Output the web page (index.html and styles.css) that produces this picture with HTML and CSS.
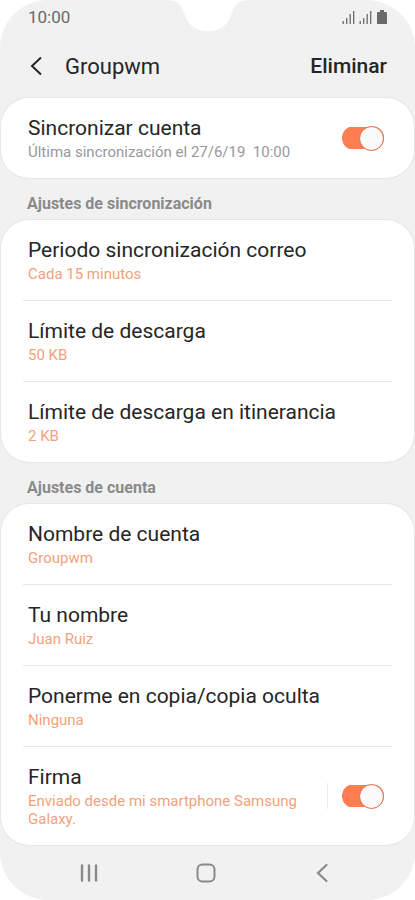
FILE: index.html
```html
<!DOCTYPE html>
<html lang="es">
<head>
    <meta charset="UTF-8">
    <meta name="viewport" content="width=device-width, initial-scale=1.0">
    <title>Groupwm</title>
    <link rel="stylesheet" href="styles.css">
</head>
<body>
    <div class="phone">
        <div class="status-bar">
            <span>10:00</span>
            <svg class="notch" width="84" height="32" viewBox="0 0 84 32">
                <path d="M0 0C12 0 15 5 18 13C22 25 29 31 42 31C55 31 62 25 66 13C69 5 72 0 84 0Z" fill="#fff"/>
            </svg>
            <svg class="status-icons" width="46" height="16" viewBox="0 0 46 16">
                <g stroke="#6a6a6a" stroke-width="1.3">
                    <path d="M1.2 15v-3M4.7 15v-6M8.2 15V5M11.7 15V2"/>
                    <path d="M18.2 15v-3M21.7 15v-6M25.2 15V5M28.7 15V2"/>
                </g>
                <path d="M35 15V4q0-1 1-1h2V1h4v2h2q1 0 1 1v11z" fill="#6a6a6a"/>
            </svg>
        </div>

        <header class="header">
            <button class="back" aria-label="Atrás">
                <svg width="12" height="20" viewBox="0 0 12 20">
                    <path d="M11 1.500L2 10l9 8.500" fill="none" stroke="#252525" stroke-width="2"/>
                </svg>
            </button>
            <h1>Groupwm</h1>
            <button class="delete">Eliminar</button>
        </header>

        <main>
            <section class="card">
                <div class="row">
                    <label class="text" for="sync">
                        <span class="title">Sincronizar cuenta</span>
                        <span class="sub grey">Última sincronización el 27/6/19 &nbsp;10:00</span>
                    </label>
                    <input class="switch" type="checkbox" id="sync" checked>
                </div>
            </section>

            <h2>Ajustes de sincronización</h2>
            <section class="card">
                <div class="row">
                    <div class="text">
                        <span class="title">Periodo sincronización correo</span>
                        <span class="sub">Cada 15 minutos</span>
                    </div>
                </div>
                <div class="row">
                    <div class="text">
                        <span class="title">Límite de descarga</span>
                        <span class="sub">50 KB</span>
                    </div>
                </div>
                <div class="row">
                    <div class="text">
                        <span class="title">Límite de descarga en itinerancia</span>
                        <span class="sub">2 KB</span>
                    </div>
                </div>
            </section>

            <h2>Ajustes de cuenta</h2>
            <section class="card">
                <div class="row">
                    <div class="text">
                        <span class="title">Nombre de cuenta</span>
                        <span class="sub">Groupwm</span>
                    </div>
                </div>
                <div class="row">
                    <div class="text">
                        <span class="title">Tu nombre</span>
                        <span class="sub">Juan Ruiz</span>
                    </div>
                </div>
                <div class="row">
                    <div class="text">
                        <span class="title">Ponerme en copia/copia oculta</span>
                        <span class="sub">Ninguna</span>
                    </div>
                </div>
                <div class="row">
                    <label class="text" for="signature">
                        <span class="title">Firma</span>
                        <span class="sub">Enviado desde mi smartphone Samsung Galaxy.</span>
                    </label>
                    <span class="separator"></span>
                    <input class="switch" type="checkbox" id="signature" checked>
                </div>
            </section>
        </main>

        <nav class="nav-bar">
            <button aria-label="Recientes">
                <svg width="20" height="20" viewBox="0 0 20 20">
                    <path d="M3 2.500v15M10 2.500v15M17 2.500v15" stroke="#8a8a8a" stroke-width="2.400" stroke-linecap="round"/>
                </svg>
            </button>
            <button aria-label="Inicio">
                <svg width="20" height="20" viewBox="0 0 20 20">
                    <rect x="1.500" y="1.500" width="17" height="17" rx="5" fill="none" stroke="#8a8a8a" stroke-width="2"/>
                </svg>
            </button>
            <button aria-label="Volver">
                <svg width="20" height="20" viewBox="0 0 20 20">
                    <path d="M14.500 2L6 10l8.500 8" fill="none" stroke="#8a8a8a" stroke-width="2.200" stroke-linecap="round"/>
                </svg>
            </button>
        </nav>
    </div>
</body>
</html>
```
FILE: styles.css
```css
body {
    font-family: Roboto, Arial, sans-serif;
    margin: 0;
    background-color: #fff;
    color: #252525;
}

button {
    background: none;
    border: none;
    padding: 0;
    font-family: inherit;
    color: inherit;
    cursor: pointer;
}

svg {
    display: block;
}

.phone {
    display: flex;
    flex-direction: column;
    min-height: 100vh;
    background-color: #f1f1f1;
    border-radius: 48px;
    overflow: hidden;
}

.status-bar {
    position: relative;
    display: flex;
    justify-content: space-between;
    align-items: center;
    height: 34px;
    padding: 0 27px 0 28px;
    font-size: 17px;
    color: #6a6a6a;
}

/* camera cut-out, lies over the bar */
.notch {
    position: absolute;
    top: 0;
    left: 50%;
    transform: translateX(-50%);
}

.header {
    display: flex;
    align-items: center;
    height: 64px;
    padding: 0 28px 0 30px;
}

.header h1 {
    flex-grow: 1;
    margin: 0 0 0 23px;
    font-size: 22px;
    font-weight: 400;
}

.delete {
    font-size: 21px;
    font-weight: 500;
}

.card {
    margin: 0 1px;
    background-color: #fff;
    border-radius: 28px;
    box-shadow: 0 0 0 1px #e6e6e6;
}

.row {
    display: flex;
    align-items: center;
    margin: 0 22px;
    padding: 17px 8px 17px 5px;
}

.row + .row {
    border-top: 1px solid #e8e8e8;
}

.text {
    display: flex;
    flex-direction: column;
    flex: 1;
    gap: 2px;
}

.title {
    font-size: 21px;
    line-height: 26px;
}

.sub {
    font-size: 15px;
    line-height: 18px;
    color: #f2a27c;
}

.grey {
    color: #999;
}

h2 {
    margin: 0;
    padding: 10px 27px 0;
    font-size: 16px;
    line-height: 32px;
    font-weight: 700;
    color: #8a8a8a;
}

.separator {
    width: 1px;
    height: 26px;
    margin: 0 14px 0 24px;
    background-color: #ececec;
}

.switch {
    appearance: none;
    display: flex;
    justify-content: flex-end;
    align-items: center;
    width: 42px;
    height: 24px;
    margin: 0;
    border-radius: 12px;
    background: linear-gradient(#ff7d50, #ff7d50) center / 100% 22px no-repeat;
    cursor: pointer;
}

.switch::before {
    content: "";
    box-sizing: border-box;
    width: 25px;
    height: 25px;
    flex: none;
    border: 1px solid #e0683c;
    border-radius: 50%;
    background-color: #fafafa;
}

.switch:not(:checked) {
    justify-content: flex-start;
    background: #ccc;
}

.nav-bar {
    display: flex;
    flex-grow: 1;
    justify-content: space-between;
    align-items: center;
    padding: 0 83px 0 79px;
}
```
